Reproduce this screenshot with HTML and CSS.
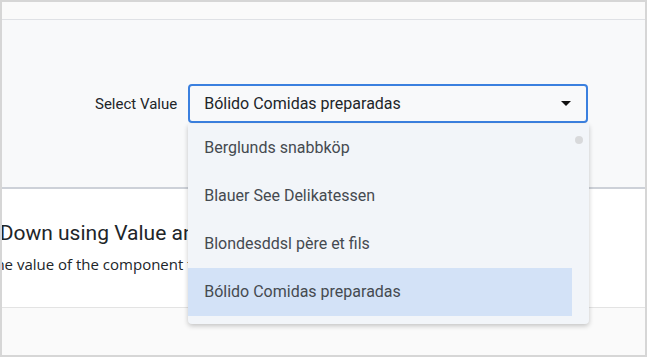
FILE: index.html
```html
<!DOCTYPE html>
<html lang="en">
<head>
    <meta charset="UTF-8">
    <meta name="viewport" content="width=device-width, initial-scale=1.0">
    <title>DropDown - Value and Text</title>
    <link rel="stylesheet" href="styles.css">
</head>
<body>
    <div class="frame">
        <div class="toolbar"></div>

        <section class="demo">
            <div class="field">
                <label class="field-label" for="company">Select Value</label>
                <div class="dropdown">
                    <div class="dropdown-input" id="company">
                        <span>Bólido Comidas preparadas</span>
                        <span class="caret"></span>
                    </div>
                    <ul class="dropdown-list">
                        <li>Berglunds snabbköp</li>
                        <li>Blauer See Delikatessen</li>
                        <li>Blondesddsl père et fils</li>
                        <li class="selected">Bólido Comidas preparadas</li>
                    </ul>
                    <span class="scroll-thumb"></span>
                </div>
            </div>
        </section>

        <section class="description">
            <h2>Drop Down using Value and Text Field</h2>
            <p>Sets the value of the component from the data source.</p>
        </section>

        <div class="footer"></div>
    </div>
</body>
</html>
```

FILE: styles.css
```css
html, body {
    margin: 0;
    padding: 0;
}

body {
    font-family: 'Roboto', 'Liberation Sans', sans-serif;
    color: #212529;
    background: #fff;
}

.frame {
    height: 357px;
    box-sizing: border-box;
    border: 2px solid #d6d6d6;
    display: flex;
    flex-direction: column;
    overflow: hidden;
}

.toolbar {
    height: 17px;
    background: #fafafa;
    border-bottom: 1px solid #dfe1e5;
}

.demo {
    height: 169px;
    box-sizing: border-box;
    background: #f8f9fa;
    border-bottom: 2px solid #cdd1d8;
    padding-top: 64px;
}

.field {
    display: flex;
    align-items: center;
    padding-left: 93px;
    gap: 11px;
}

.field-label {
    font-size: 15px;
    color: #212529;
}

.dropdown {
    position: relative;
    width: 400px;
}

.dropdown-input {
    height: 39px;
    box-sizing: border-box;
    border: 2px solid #3b80df;
    border-radius: 4px;
    background: #f8f9fa;
    display: flex;
    align-items: center;
    justify-content: space-between;
    padding: 0 15px 0 14px;
    font-size: 16px;
    color: #212529;
}

.caret {
    width: 0;
    height: 0;
    border-left: 5px solid transparent;
    border-right: 5px solid transparent;
    border-top: 5px solid #111;
}

.dropdown-list {
    position: absolute;
    top: 40px;
    left: 0;
    width: 401px;
    margin: 0;
    padding: 0 17px 8px 0;
    box-sizing: border-box;
    list-style: none;
    background: #f2f5f9;
    border-radius: 0 0 4px 4px;
    box-shadow: 0 2px 5px rgba(0, 0, 0, 0.22);
    z-index: 10;
}

.dropdown-list li {
    height: 48px;
    line-height: 48px;
    padding-left: 16px;
    font-size: 16px;
    color: #454a50;
}

.dropdown-list li.selected {
    background: #d3e2f7;
}

.scroll-thumb {
    position: absolute;
    top: 52px;
    right: 5px;
    width: 8px;
    height: 8px;
    border-radius: 50%;
    background: #d8d9db;
    z-index: 11;
}

.description {
    height: 119px;
    box-sizing: border-box;
    background: #fff;
    border-bottom: 1px solid #e3e3e3;
    padding-top: 32px;
}

.description h2 {
    margin: 0 0 9px -52px;
    font-size: 21px;
    font-weight: 400;
    white-space: nowrap;
}

.description p {
    margin: 0 0 0 -45px;
    font-family: 'Open Sans', 'Liberation Sans', sans-serif;
    font-size: 15px;
    white-space: nowrap;
}

.footer {
    flex: 1;
    background: #fafafa;
}
```
